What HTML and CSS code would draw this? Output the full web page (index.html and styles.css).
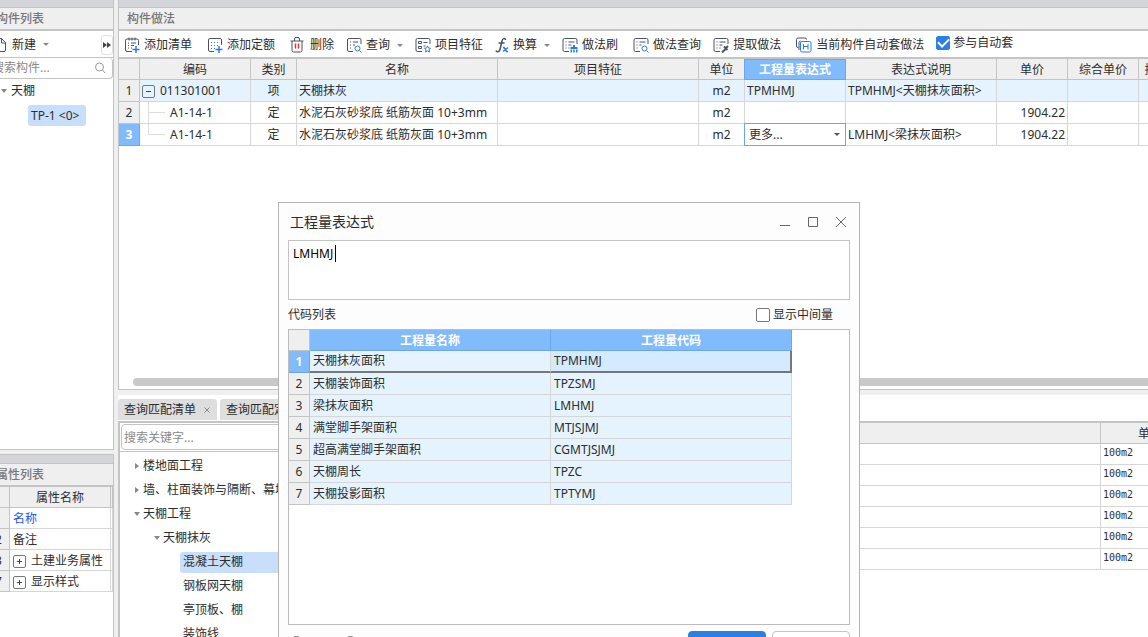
FILE: index.html
```html
<!DOCTYPE html>
<html lang="zh-CN">
<head>
<meta charset="utf-8">
<meta name="viewport" content="width=device-width, initial-scale=1">
<title>构件做法</title>
<link rel="stylesheet" href="styles.css">
</head>
<body>
<div class="app">
  <aside class="side">
    <section class="panel side-top">
      <div class="band"></div>
      <h2 class="panel-title">构件列表</h2>
      <div class="side-tools">
        <button class="tool" type="button">
          <svg class="icon" viewBox="0 0 16 16"><path d="M2 1.500h7.500l4 4V13a1.500 1.500 0 0 1-1.500 1.500H2zM9.500 1.500V6h4"/></svg>
          <span>新建</span><i class="caret"></i>
        </button>
        <button class="expand" type="button" aria-label="展开"><i></i><i></i></button>
      </div>
      <div class="side-search">
        <input type="text" aria-label="搜索构件" placeholder="搜索构件...">
        <svg class="lens" viewBox="0 0 12 12"><circle cx="5.500" cy="5" r="4"/><path d="M8.500 8l2.500 3"/></svg>
      </div>
      <ul class="parts">
        <li><i class="open"></i>天棚</li>
        <li class="child"><span class="chip">TP-1 &lt;0&gt;</span></li>
      </ul>
    </section>
    <section class="panel side-bottom">
      <div class="band"></div>
      <h2 class="panel-title">属性列表</h2>
      <table class="grid props">
        <colgroup><col class="c-num"><col class="c-prop"><col class="c-rest"></colgroup>
        <thead><tr><th></th><th>属性名称</th><th></th></tr></thead>
        <tbody>
          <tr><th>1</th><td class="blue">名称</td><td></td></tr>
          <tr><th>2</th><td>备注</td><td></td></tr>
          <tr><th>3</th><td><button class="box plus" type="button" aria-label="展开土建业务属性"></button>土建业务属性</td><td></td></tr>
          <tr><th>7</th><td><button class="box plus" type="button" aria-label="展开显示样式"></button>显示样式</td><td></td></tr>
        </tbody>
      </table>
    </section>
  </aside>

  <main class="main">
    <section class="panel work">
      <div class="band"></div>
      <h1 class="panel-title">构件做法</h1>
      <div class="toolbar">
        <button class="tool spaced" type="button">
          <svg class="icon" viewBox="0 0 16 16"><path d="M8 14.500H3A1.500 1.500 0 0 1 1.500 13V3.500A1.500 1.500 0 0 1 3 2h10a1.500 1.500 0 0 1 1.500 1.500V8M5 .5v3M8 .5v3M11 .5v3M4 6h1M7 6h5M4 8.500h1M7 8.500h3M4 11h1M7 11h1"/><path class="accent strong" d="M12 9v7M8.500 12.500h7"/></svg>
          <span>添加清单</span></button>
        <button class="tool spaced" type="button">
          <svg class="icon" viewBox="0 0 16 16"><path d="M7 14.500H3A1.500 1.500 0 0 1 1.500 13V3A1.500 1.500 0 0 1 3 1.500h10A1.500 1.500 0 0 1 14.500 3v5"/><path class="accent" d="M4 5.500h1M7 5.500h1M10 5.500h1M4 8.500h1M7 8.500h1M10 8.500h1M4 11.500h1M7 11.500h1"/><path class="accent strong" d="M12 9v7M8.500 12.500h7"/></svg>
          <span>添加定额</span></button>
        <button class="tool" type="button">
          <svg class="icon" viewBox="0 0 16 16"><path d="M.5 4h13M4.500 4V2A1.500 1.500 0 0 1 6 .5h2A1.500 1.500 0 0 1 9.500 2v2M2 4v9.500A1.500 1.500 0 0 0 3.500 15h7a1.500 1.500 0 0 0 1.500-1.500V4"/><path class="red" d="M5.500 6.500v5M8.500 6.500v5"/></svg>
          <span>删除</span></button>
        <button class="tool" type="button">
          <svg class="icon" viewBox="0 0 16 16"><path d="M7 14.500H3A1.500 1.500 0 0 1 1.500 13V3A1.500 1.500 0 0 1 3 1.500h10.500A1.500 1.500 0 0 1 15 3v4M4 5h1M7 5h5M4 8h1M7 8h2M4 11h1"/><g class="accent"><circle cx="11.500" cy="11.500" r="2.500"/><path d="M13.500 13.500l2 2"/></g></svg>
          <span>查询</span><i class="caret"></i></button>
        <button class="tool" type="button">
          <svg class="icon" viewBox="0 0 16 16"><path d="M7 14.500H2.500A1.500 1.500 0 0 1 1 13V3a1.500 1.500 0 0 1 1.500-1.500h11A1.500 1.500 0 0 1 15 3v4M3.500 4.500h3v2h-3zM3.500 9.500h3v2h-3zM8.500 5.500h4M8.500 9h2"/><path class="accent" d="M12.500 9l1 2 2 .3-1.500 1.400.5 2.300-2-1-2 1 .5-2.300-1.500-1.400 2-.3z"/></svg>
          <span>项目特征</span></button>
        <button class="tool" type="button">
          <svg class="icon fx" viewBox="0 0 14 16"><path d="M10.500 3C10.500 1 7.500 1 7 4L5 12.500C4.500 15 1.500 15.500 1 13.500M3.500 6h6"/><path class="accent strong" d="M8 10.500h1l2.500 4h1.500M13 10.500l-5 4"/></svg>
          <span>换算</span><i class="caret"></i></button>
        <button class="tool spaced" type="button">
          <svg class="icon" viewBox="0 0 16 16"><path d="M7 14.500H2.500A1.500 1.500 0 0 1 1 13V3a1.500 1.500 0 0 1 1.500-1.500h11A1.500 1.500 0 0 1 15 3v4M3.500 5h1M6.500 5h6M3.500 8h1M6.500 8h3M3.500 11h1M6.500 11h1"/><path class="brush" d="M11 8h2v2h2.500v2h-7v-2H11zM8.500 12.500h1.500v3H8.500zM11.200 12.500h1.500v3h-1.500zM14 12.500h1.500v3H14z"/></svg>
          <span>做法刷</span></button>
        <button class="tool" type="button">
          <svg class="icon" viewBox="0 0 16 16"><path d="M7 14.500H2.500A1.500 1.500 0 0 1 1 13V3a1.500 1.500 0 0 1 1.500-1.500h11A1.500 1.500 0 0 1 15 3v4M3.500 5h1M6.500 5h6M3.500 8h1M6.500 8h2M3.500 11h1"/><g class="accent"><circle cx="11.500" cy="11.500" r="2.500"/><path d="M13.500 13.500l2 2"/></g></svg>
          <span>做法查询</span></button>
        <button class="tool spaced" type="button">
          <svg class="icon" viewBox="0 0 16 16"><path d="M7 14.500H2.500A1.500 1.500 0 0 1 1 13V3a1.500 1.500 0 0 1 1.500-1.500h11A1.500 1.500 0 0 1 15 3v4M3.500 5h1M6.500 5h6M3.500 8h1M6.500 8h3M3.500 11h1M6.500 11h1"/><path class="dark" d="M9 15.500l3.500-3.500M11 9.500l3.500 3.500M13 11l2-2"/></svg>
          <span>提取做法</span></button>
        <button class="tool" type="button">
          <svg class="icon" viewBox="0 0 16 16"><path d="M2.500 10.500H2A1.500 1.500 0 0 1 .5 9V2.500A1.500 1.500 0 0 1 2 1h7a1.500 1.500 0 0 1 1.500 1.500M3 13V5.500A1.500 1.500 0 0 1 4.500 4"/><g class="accent"><rect x="4.500" y="4.500" width="10.500" height="10.500" rx="1.500"/><path d="M7.500 7v5.500M12 7v5.500M7.500 9.500H12"/></g></svg>
          <span>当前构件自动套做法</span></button>
        <label class="check"><input type="checkbox" checked><span>参与自动套</span></label>
      </div>
      <div class="sheet">
        <table class="grid items">
          <colgroup><col class="w21"><col class="w111"><col class="w46"><col class="w201"><col class="w201"><col class="w46"><col class="w101"><col class="w151"><col class="w71"><col class="w71"><col class="w60"></colgroup>
          <thead><tr><th></th><th>编码</th><th>类别</th><th>名称</th><th>项目特征</th><th>单位</th><th class="active">工程量表达式</th><th>表达式说明</th><th>单价</th><th>综合单价</th><th>措施项目</th></tr></thead>
          <tbody>
            <tr class="tint"><th>1</th><td><button class="box minus" type="button" aria-label="折叠"></button>011301001</td><td class="mid">项</td><td>天棚抹灰</td><td></td><td class="mid">m2</td><td>TPMHMJ</td><td>TPMHMJ&lt;天棚抹灰面积&gt;</td><td></td><td></td><td></td></tr>
            <tr><th>2</th><td class="branch">A1-14-1</td><td class="mid">定</td><td>水泥石灰砂浆底 纸筋灰面 10+3mm</td><td></td><td class="mid">m2</td><td></td><td></td><td class="num">1904.22</td><td></td><td></td></tr>
            <tr><th class="active">3</th><td class="branch last">A1-14-1</td><td class="mid">定</td><td>水泥石灰砂浆底 纸筋灰面 10+3mm</td><td></td><td class="mid">m2</td><td class="edit"><select aria-label="工程量表达式"><option>更多...</option></select></td><td>LMHMJ&lt;梁抹灰面积&gt;</td><td class="num">1904.22</td><td></td><td></td></tr>
          </tbody>
        </table>
      </div>
      <div class="hscroll"></div>
    </section>

    <section class="query">
      <nav class="tabs">
        <button class="tab" type="button">查询匹配清单<svg class="x" viewBox="0 0 6 6"><path d="M.5 .5l5 5M5.500 .5l-5 5"/></svg></button>
        <button class="tab" type="button">查询匹配定额<svg class="x" viewBox="0 0 6 6"><path d="M.5 .5l5 5M5.500 .5l-5 5"/></svg></button>
      </nav>
      <div class="query-body">
        <div class="catalog">
          <div class="catalog-search"><input type="text" aria-label="搜索关键字" placeholder="搜索关键字..."></div>
          <ul class="tree">
            <li><i class="shut"></i><span>楼地面工程</span></li>
            <li><i class="shut"></i><span>墙、柱面装饰与隔断、幕墙工程</span></li>
            <li><i class="open"></i><span>天棚工程</span></li>
            <li class="lv2"><i class="open"></i><span>天棚抹灰</span></li>
            <li class="lv3 chosen"><span>混凝土天棚</span></li>
            <li class="lv3"><span>钢板网天棚</span></li>
            <li class="lv3"><span>亭顶板、棚</span></li>
            <li class="lv3"><span>装饰线</span></li>
          </ul>
        </div>
        <div class="results">
          <table class="grid units">
            <colgroup><col><col class="c-unit"></colgroup>
            <thead><tr><th></th><th>单位</th></tr></thead>
            <tbody>
              <tr><td></td><td>100m2</td></tr>
              <tr><td></td><td>100m2</td></tr>
              <tr><td></td><td>100m2</td></tr>
              <tr><td></td><td>100m2</td></tr>
              <tr><td></td><td>100m2</td></tr>
              <tr><td></td><td>100m2</td></tr>
            </tbody>
          </table>
        </div>
      </div>
    </section>
  </main>

  <div class="dialog" role="dialog" aria-labelledby="dlg-title">
    <header class="dialog-head">
      <h2 id="dlg-title">工程量表达式</h2>
      <button type="button" aria-label="最小化"><svg viewBox="0 0 12 12"><path d="M1 9.500h10"/></svg></button>
      <button type="button" aria-label="最大化"><svg viewBox="0 0 12 12"><path d="M1.500 1.500h9v9h-9z"/></svg></button>
      <button type="button" aria-label="关闭"><svg viewBox="0 0 12 12"><path d="M1 1l10 10M11 1L1 11"/></svg></button>
    </header>
    <div class="formula"><textarea aria-label="表达式">LMHMJ</textarea></div>
    <div class="list-head">
      <span>代码列表</span>
      <label class="check"><input type="checkbox"><span>显示中间量</span></label>
    </div>
    <div class="code-box">
      <table class="grid codes">
        <colgroup><col class="w21"><col class="w241"><col class="w241"></colgroup>
        <thead><tr><th></th><th class="active">工程量名称</th><th class="active">工程量代码</th></tr></thead>
        <tbody>
          <tr class="current"><th class="active">1</th><td>天棚抹灰面积</td><td>TPMHMJ</td></tr>
          <tr><th>2</th><td>天棚装饰面积</td><td>TPZSMJ</td></tr>
          <tr><th>3</th><td>梁抹灰面积</td><td>LMHMJ</td></tr>
          <tr><th>4</th><td>满堂脚手架面积</td><td>MTJSJMJ</td></tr>
          <tr><th>5</th><td>超高满堂脚手架面积</td><td>CGMTJSJMJ</td></tr>
          <tr><th>6</th><td>天棚周长</td><td>TPZC</td></tr>
          <tr><th>7</th><td>天棚投影面积</td><td>TPTYMJ</td></tr>
        </tbody>
      </table>
    </div>
    <footer class="dialog-foot">
      <input type="radio" name="mode" aria-label="追加">
      <input type="radio" name="mode" aria-label="替换">
      <button class="primary" type="button" aria-label="确定"></button>
      <button type="button" aria-label="取消"></button>
    </footer>
  </div>
</div>
</body>
</html>
```
FILE: styles.css
```css
* { box-sizing: border-box; }

:root {
  --line: #c3c5c5;
  --cell: #d6d6d6;
  --grey: #efefef;
  --blue: #82bbfb;
  --blue-line: #6ba6e6;
  --tint: #e5f3ff;
  --ink: #2d2d2d;
}

body {
  margin: 0;
  height: 100vh;
  overflow: hidden;
  background: var(--grey);
  color: var(--ink);
  font: 12px/20px "Noto Sans", "Noto Sans CJK SC", sans-serif;
}

h1, h2, ul { margin: 0; padding: 0; list-style: none; }
button, input, select, textarea { font: inherit; color: inherit; margin: 0; }
button { padding: 0; border: 0; background: none; white-space: nowrap; }

.app { position: relative; display: flex; gap: 4px; height: 100%; overflow: hidden; }

/* shared panels */
.panel { display: flex; flex-direction: column; background: #fff; min-height: 0; overflow: hidden; }
.band { height: 8px; flex: none; background: #d4d5db; border-bottom: 1px solid var(--line); }
.panel-title {
  flex: none;
  height: 23px;
  padding-left: 8px;
  background: var(--grey);
  border-bottom: 2px solid var(--line);
  color: #777;
  font-size: 12px;
  font-weight: 500;
  line-height: 22px;
}

.caret, .open, .shut { display: block; flex: none; width: 0; height: 0; border: 3px solid transparent; }
.caret, .open { border-top: 4px solid #888; border-bottom: 0; }
.shut { border-left: 4px solid #888; border-right: 0; }

/* tables */
.grid { border-collapse: separate; border-spacing: 0; table-layout: fixed; }
.grid th, .grid td {
  height: 22px;
  padding: 0 2px;
  border: solid var(--cell);
  border-width: 0 1px 1px 0;
  line-height: 20px;
  white-space: nowrap;
  overflow: hidden;
  text-align: left;
}
.grid th { background: var(--grey); border-color: var(--line); font-weight: 400; text-align: center; }
.grid thead th { height: 21px; padding-top: 2px; line-height: 18px; }
.grid th.active { background: var(--blue); border-color: var(--blue-line); color: #fff; font-weight: 700; }
.grid .mid { text-align: center; }
.grid .num { text-align: right; }
.grid .blue { color: #1a56f0; }

.box {
  display: inline-block;
  width: 13px;
  height: 13px;
  margin-right: 5px;
  border: 1px solid #777;
  border-radius: 2px;
  background: linear-gradient(#345, #345) center / 5px 1px no-repeat;
  vertical-align: -2px;
}
.box.plus {
  background: linear-gradient(#345, #345) center / 5px 1px no-repeat,
    linear-gradient(#345, #345) center / 1px 5px no-repeat;
}

/* left column */
.side { flex: none; display: flex; flex-direction: column; gap: 4px; width: 126px; margin-left: -12px; }
.side .panel { border-right: 1px solid var(--line); }
.side-top { flex: 450 1 0; border-bottom: 1px solid var(--line); }
.side-bottom { flex: 183 1 0; }
.side-bottom .band { height: 10px; border-top: 1px solid var(--line); }
.side-tools {
  flex: none;
  display: flex;
  align-items: center;
  justify-content: space-between;
  height: 27px;
  padding: 1px 0 0 4px;
  border-bottom: 1px solid var(--line);
}
.expand {
  display: flex;
  align-items: center;
  justify-content: center;
  width: 12px;
  height: 20px;
  border: 1px solid #e2e2e2;
  border-radius: 3px;
}
.expand i { border: 3px solid transparent; border-left: 4px solid #444; border-right: 0; }
.side-search {
  flex: none;
  display: flex;
  align-items: center;
  height: 21px;
  padding: 0 6px 0 3px;
  border: 1px solid var(--line);
  border-top: 0;
  border-radius: 0 4px 4px 0;
}
.side-search input { flex: 1; min-width: 0; padding: 0; border: 0; outline: 0; background: none; }
input::placeholder { color: #8a8a8a; opacity: 1; }
.lens { width: 12px; height: 12px; fill: none; stroke: #999; }
.parts li { display: flex; align-items: center; gap: 4px; height: 24px; padding-left: 13px; }
.parts .child { padding-left: 40px; }
.chip { padding: 0 7px 0 3px; background: #c7dffa; border-radius: 3px; line-height: 21px; }
.props { width: 100%; }
.props th, .props td { height: 21px; line-height: 19px; }
.grid.props td { padding-left: 3px; }
.c-num { width: 22px; }
.c-prop { width: 101px; }

/* main column */
.main { flex: 1; min-width: 0; display: flex; flex-direction: column; gap: 5px; }
.work { flex: 390 1 0; border: solid var(--line); border-width: 0 0 1px 1px; }
.toolbar {
  flex: none;
  display: flex;
  align-items: center;
  gap: 12px;
  height: 28px;
  padding: 2px 0 0 5px;
  border-bottom: 2px solid var(--line);
  overflow: hidden;
}
.tool { display: flex; align-items: center; gap: 4px; flex: none; }
.tool.spaced { margin-right: 3px; }
.tool .caret { margin-left: 3px; border-width: 3px 3px 0; }
.icon { width: 16px; height: 16px; fill: none; stroke: #4b5262; flex: none; }
.icon.fx { width: 14px; stroke-width: 1.500; }
.icon .accent { stroke: #2b7ce6; }
.icon .strong { stroke-width: 1.500; }
.icon .red { stroke: #e03434; stroke-width: 1.500; }
.icon .dark { stroke-width: 2; }
.icon .brush { fill: #2b7ce6; stroke: none; }
.check { display: flex; align-items: center; gap: 3px; flex: none; }
.toolbar .check { align-self: flex-start; }
.check input {
  appearance: none;
  width: 14px;
  height: 14px;
  border: 1px solid #777;
  border-radius: 2px;
  background: #fff;
}
.check input:checked { display: grid; place-items: center; border-color: #2b7fe5; background: #2b7fe5; }
.check input:checked::before {
  content: "";
  width: 9px;
  height: 5px;
  margin-bottom: 3px;
  border: solid #fff;
  border-width: 0 0 2px 2px;
  transform: rotate(-45deg);
}

.sheet { flex: 1; min-height: 0; overflow: hidden; }
.items { width: 1080px; }
.w21 { width: 21px; }
.w46 { width: 46px; }
.w60 { width: 60px; }
.w71 { width: 71px; }
.w101 { width: 101px; }
.w111 { width: 111px; }
.w151 { width: 151px; }
.w201 { width: 201px; }
.w241 { width: 241px; }
.items .tint td { background: var(--tint); }
.items thead .active { box-shadow: -1px 0 var(--blue-line), inset 0 1px var(--blue-line); }
.grid .branch {
  padding-left: 30px;
  background: linear-gradient(#ddd, #ddd) 8px 50% / 17px 1px no-repeat,
    linear-gradient(#ddd, #ddd) 8px 0 / 1px 100% no-repeat;
}
.grid .branch.last {
  background-size: 17px 1px, 1px 50%;
}
.grid .edit { position: relative; padding: 0; overflow: visible; }
.edit select {
  display: block;
  appearance: none;
  width: 100%;
  height: 21px;
  padding: 0 4px;
  border: 0;
  border-radius: 0;
  outline: 1px solid var(--blue-line);
  background: #fff;
}
.edit::after {
  content: "";
  position: absolute;
  right: 5px;
  top: 9px;
  border: solid transparent;
  border-width: 3px 3px 0;
  border-top-color: #555;
  pointer-events: none;
}
.hscroll { flex: none; height: 8px; margin: 0 0 3px 14px; border-radius: 4px 0 0 4px; background: #c9c9c9; }

/* query area */
.query { flex: 242 1 0; min-height: 0; display: flex; flex-direction: column; background: #fff; overflow: hidden; }
.tabs { flex: none; display: flex; gap: 3px; padding-top: 4px; border-bottom: 2px solid var(--line); height: 28px; }
.tab {
  display: flex;
  align-items: center;
  gap: 8px;
  height: 21px;
  padding: 0 7px 0 6px;
  border-radius: 3px 3px 0 0;
  background: #dedede;
}
.x { width: 6px; height: 6px; fill: none; stroke: #888; }
.query-body { flex: 1; min-height: 0; display: flex; }
.catalog { flex: 0 0 400px; border-left: 2px solid var(--line); }
.catalog-search { height: 29px; padding: 1px; border-bottom: 1px solid var(--line); }
.catalog-search input {
  display: block;
  width: 100%;
  height: 26px;
  padding: 0 2px;
  border: 1px solid var(--line);
  border-radius: 4px;
  background: #fff;
}
.tree { padding-top: 2px; }
.tree li { display: flex; align-items: center; gap: 3px; height: 24px; padding-left: 14px; white-space: nowrap; }
.tree .shut { margin: 0 1px; }
.tree .lv2 { padding-left: 34px; }
.tree .lv3 { padding-left: 60px; }
.tree .lv3 span { flex: 1; padding: 0 0 2px 3px; line-height: 19px; }
.tree .chosen span { background: #c7dffa; border-radius: 3px 0 0 3px; }
.results { flex: 1; min-width: 0; overflow: hidden; }
.units { width: calc(100% + 52px); }
.c-unit { width: 99px; }
.units th, .units td { height: 21px; line-height: 19px; }
.grid.units td { padding-bottom: 2px; line-height: 18px; font-family: "DejaVu Sans Mono", monospace; font-size: 10px; }

/* expression window */
.dialog {
  position: absolute;
  left: 278px;
  right: 288px;
  top: 202px;
  display: flex;
  flex-direction: column;
  padding: 0 9px 12px;
  border: 1px solid #b4b4b4;
  background: #fdfdfd;
}
.dialog-head { display: flex; align-items: center; gap: 16px; height: 37px; padding: 0 3px 0 2px; }
.dialog-head h2 { flex: 1; font-size: 14px; font-weight: 400; }
.dialog-head svg { display: block; width: 12px; height: 12px; fill: none; stroke: #666; }
.formula { height: 60px; }
.formula textarea {
  display: block;
  width: 100%;
  height: 100%;
  padding: 3px 4px;
  border: 1px solid var(--line);
  outline: 0;
  background: linear-gradient(#000, #000) 46px 4px / 1px 17px no-repeat #fff;
  color: #000;
  resize: none;
}
.list-head { display: flex; align-items: center; justify-content: space-between; height: 29px; padding-right: 17px; }
.code-box { min-height: 296px; border: 1px solid #bcbcbc; background: #fff; }
.codes { width: 503px; }
.codes td { background: var(--tint); }
.grid.codes td { padding-left: 3px; }
.codes .current td { border-bottom: 2px solid #777; }
.codes .current td:last-child { border-right: 2px solid #777; background: #d4eaff; }
.dialog-foot { display: flex; align-items: flex-start; gap: 6px; padding-top: 6px; }
.dialog-foot input { flex: none; width: 13px; height: 13px; margin: 5px 33px 0 2px; }
.dialog-foot button { width: 78px; height: 28px; border: 1px solid var(--line); border-radius: 4px; background: #fff; }
.dialog-foot .primary { margin-left: auto; border-color: #2b7fe5; background: #2b7fe5; }
```
